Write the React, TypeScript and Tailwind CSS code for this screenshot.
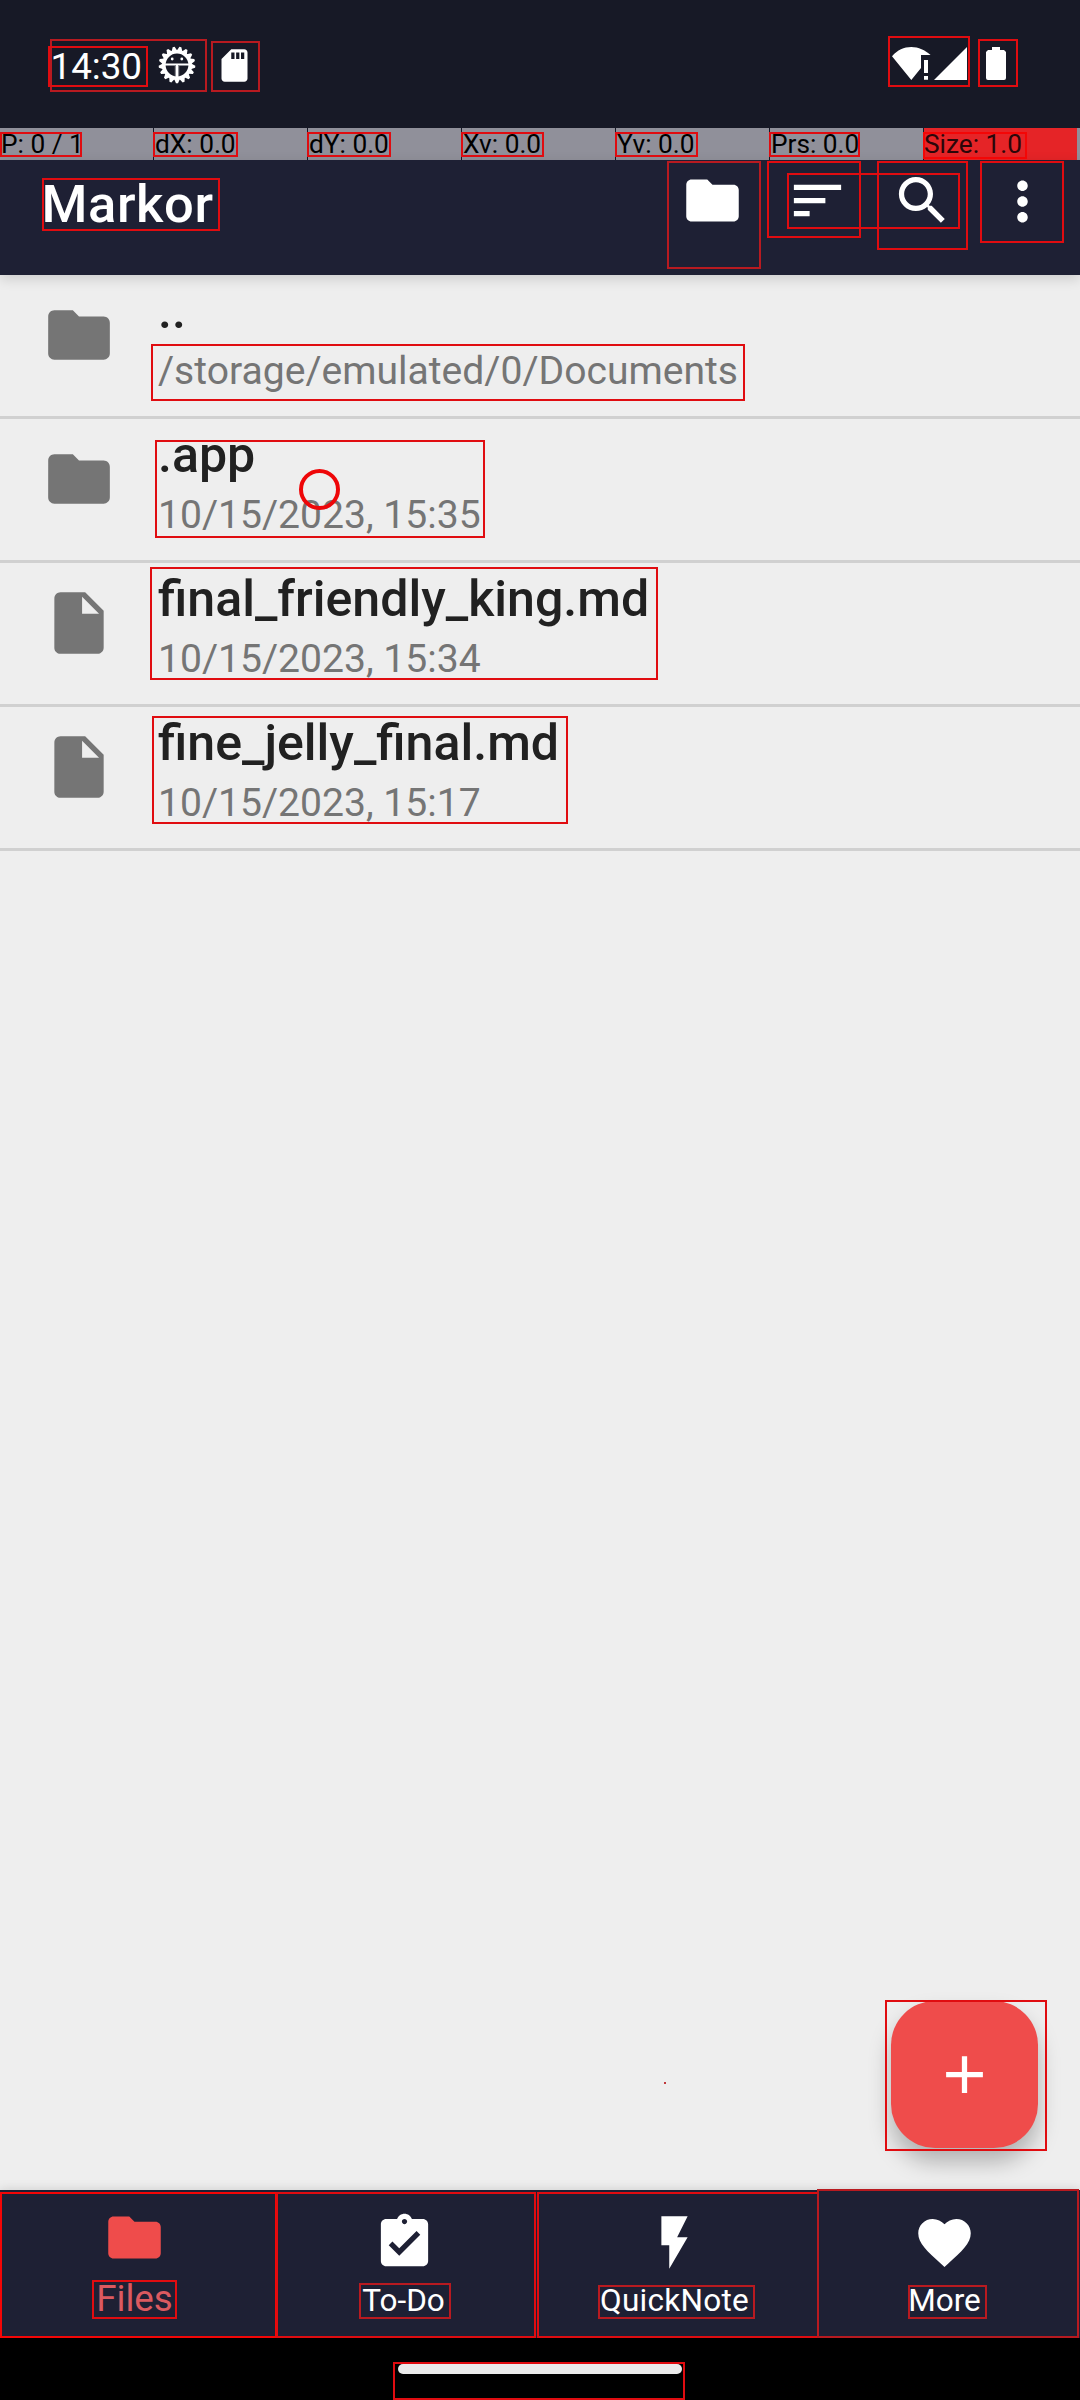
import React from "react";

const PATHS = {
  folder: "M10 4H4c-1.1 0-1.99.9-1.99 2L2 18c0 1.1.9 2 2 2h16c1.1 0 2-.9 2-2V8c0-1.1-.9-2-2-2h-8l-2-2z",
  file: "M6 2c-1.1 0-1.99.9-1.99 2L4 20c0 1.1.89 2 1.99 2H18c1.1 0 2-.9 2-2V8l-6-6H6zm7 7V3.5L18.5 9H13z",
  sort: "M3 18h6v-2H3v2zM3 6v2h18V6H3zm0 7h12v-2H3v2z",
  search:
    "M15.5 14h-.79l-.28-.27C15.41 12.59 16 11.11 16 9.5 16 5.91 13.09 3 9.5 3S3 5.91 3 9.5 5.91 16 9.5 16c1.61 0 3.09-.59 4.23-1.57l.27.28v.79l5 4.99L20.49 19l-4.99-5zm-6 0C7.01 14 5 11.99 5 9.5S7.01 5 9.5 5 14 7.01 14 9.5 11.99 14 9.5 14z",
  more: "M12 8c1.1 0 2-.9 2-2s-.9-2-2-2-2 .9-2 2 .9 2 2 2zm0 2c-1.1 0-2 .9-2 2s.9 2 2 2 2-.9 2-2-.9-2-2-2zm0 6c-1.1 0-2 .9-2 2s.9 2 2 2 2-.9 2-2-.9-2-2-2z",
  add: "M19 13h-6v6h-2v-6H5v-2h6V5h2v6h6v2z",
  todo: "M19 3h-4.18C14.4 1.84 13.3 1 12 1c-1.3 0-2.4.84-2.82 2H5c-1.1 0-2 .9-2 2v14c0 1.1.9 2 2 2h14c1.1 0 2-.9 2-2V5c0-1.1-.9-2-2-2zm-7 0c.55 0 1 .45 1 1s-.45 1-1 1-1-.45-1-1 .45-1 1-1zm-2 14l-4-4 1.41-1.41L10 14.17l6.59-6.59L18 9l-8 8z",
  flash: "M7 2v11h3v9l7-12h-4l4-8z",
  heart:
    "M12 21.35l-1.45-1.32C5.4 15.36 2 12.28 2 8.5 2 5.42 4.42 3 7.5 3c1.74 0 3.41.81 4.5 2.09C13.09 3.81 14.76 3 16.5 3 19.58 3 22 5.42 22 8.5c0 3.78-3.4 6.86-8.55 11.54L12 21.35z",
  sd: "M18 2h-8L4 8v12c0 1.1.9 2 2 2h12c1.1 0 2-.9 2-2V4c0-1.1-.9-2-2-2zm-6 6h-2V4h2v4zm3 0h-2V4h2v4zm3 0h-2V4h2v4z",
};

function Icon({ name, className }: { name: keyof typeof PATHS; className: string }) {
  return (
    <svg viewBox="0 0 24 24" fill="currentColor" className={className}>
      <path d={PATHS[name]} />
    </svg>
  );
}

function GearFace() {
  const teeth = Array.from({ length: 17 }, (_, i) => (i * 360) / 17 + 180);
  return (
    <svg viewBox="-19 -19 38 38" className="ml-[9px] mt-[46px] size-[38px] shrink-0">
      {teeth.map((a) => (
        <path key={a} d="M-2.9 -14 L-1 -18.3 H1 L2.9 -14Z" fill="#fff" transform={`rotate(${a})`} />
      ))}
      <circle r="13.2" fill="none" stroke="#fff" strokeWidth="3.6" />
      <path d="M-12 -0.6H12M0 0V13" stroke="#fff" strokeWidth="2" fill="none" />
      <path d="M-1.6 1V12M1.6 1V12" stroke="#fff" strokeOpacity="0.5" strokeWidth="1.2" fill="none" />
      <circle cx="-4.8" cy="-6" r="1.4" fill="#fff" />
      <circle cx="4.8" cy="-6" r="1.4" fill="#fff" />
    </svg>
  );
}

function StatusBar() {
  return (
    <div className="flex h-[128px] items-start bg-[#171926] text-white">
      <span className="ml-[50.5px] mt-[46px] w-[98.5px] text-[36.75px] leading-[41px]">14:30</span>
      <GearFace />
      <Icon name="sd" className="ml-[19px] mt-[45.5px] size-[39px]" />
      <div className="ml-auto mr-[74px] mt-[47px] flex">
        <svg viewBox="0 0 39 33" className="h-[33px] w-[39px]" fill="#fff">
          <path d="M0 9.2C5.4 3 12 0 19.3 0S33 3 38.6 8H29V21L19.3 33Z" />
          <path d="M32 13h4v13h-4zM32 29h4v3.7h-4z" />
        </svg>
        <svg viewBox="0 0 33 33" className="ml-[3px] h-[33px] w-[33px]" fill="#fff">
          <path d="M33 0V33H0Z" />
        </svg>
        <svg viewBox="0 0 20 33" className="ml-[19px] h-[33px] w-[20px]" fill="#fff">
          <path d="M6 0h8v3h4l2 2v26q0 2-2 2H2q-2 0-2-2V5l2-2h4z" />
        </svg>
      </div>
    </div>
  );
}

const POINTER = ["P: 0 / 1", "dX: 0.0", "dY: 0.0", "Xv: 0.0", "Yv: 0.0", "Prs: 0.0", "Size: 1.0"];

function PointerBar() {
  return (
    <div className="flex h-8 bg-[#90909a] text-[26.25px] leading-[33px] text-black">
      {POINTER.map((t, i) => (
        <span
          key={t}
          className={
            i === 0
              ? "w-[153px] pl-px"
              : i === 6
                ? "w-[154px] border-l border-[#171926] bg-[#e52427] text-[#2b0609]"
                : "w-[154px] border-l border-[#171926] pl-px"
          }
        >
          {t}
        </span>
      ))}
    </div>
  );
}

function AppBar() {
  return (
    <header className="relative z-10 flex h-[115px] items-start bg-[#1e2034] text-white shadow-[0_4px_12px_rgba(0,0,0,0.14)]">
      <h1 className="ml-[41.5px] mt-[14px] text-[52.5px] font-medium leading-[60px] tracking-[0.6px]">Markor</h1>
      <div className="ml-auto mr-[26px] mt-[9px] flex">
        <Icon name="folder" className="size-[63px]" />
        <Icon name="sort" className="ml-[42px] size-[63px]" />
        <Icon name="search" className="ml-[42px] size-[63px]" />
        <Icon name="more" className="ml-[37px] mt-px size-[63px]" />
      </div>
    </header>
  );
}

const ROWS: { icon: "folder" | "file"; title: string; sub: string }[] = [
  { icon: "folder", title: "..", sub: "/storage/emulated/0/Documents" },
  { icon: "folder", title: ".app", sub: "10/15/2023, 15:35" },
  { icon: "file", title: "final_friendly_king.md", sub: "10/15/2023, 15:34" },
  { icon: "file", title: "fine_jelly_final.md", sub: "10/15/2023, 15:17" },
];

function FileList() {
  return (
    <ul>
      {ROWS.map((r) => (
        <li key={r.title} className="flex h-[144px] border-b-[3px] border-[#d0d0d0]">
          <Icon name={r.icon} className="ml-[42px] mt-[23px] size-[74px] text-[#757575]" />
          <div className="ml-[42px] pt-[7px]">
            <div className="text-[50.1px] font-medium leading-[58px] text-[#212121]">{r.title}</div>
            <div className="text-[39.1px] leading-[63px] text-[#757575]">{r.sub}</div>
          </div>
        </li>
      ))}
    </ul>
  );
}

function BottomNav() {
  return (
    <nav className="relative grid h-[148px] grid-cols-4 bg-[#1e2034] text-white shadow-[0_0_10px_rgba(0,0,0,0.15)]">
      <div className="flex flex-col items-center pr-px pt-[15.5px] text-[#ef4c4b]">
        <Icon name="folder" className="size-[63px]" />
        <span className="mt-[10px] text-[36.75px] leading-10 text-[#db5a60]">Files</span>
      </div>
      <div className="flex flex-col items-center pr-px pt-[20.5px]">
        <Icon name="todo" className="size-[63px]" />
        <span className="mt-[7px] pr-0.5 text-[31.5px] leading-10">To-Do</span>
      </div>
      <div className="flex flex-col items-center pr-px pt-[20.5px]">
        <Icon name="flash" className="size-[63px]" />
        <span className="mt-[7px] text-[31.5px] leading-10 tracking-[0.25px]">QuickNote</span>
      </div>
      <div className="flex flex-col items-center pr-px pt-[20.5px]">
        <Icon name="heart" className="size-[63px]" />
        <span className="mt-[7px] text-[31.5px] leading-10">More</span>
      </div>
    </nav>
  );
}

const DARK = "#b81a20";
const MID = "#e00c10";
const BRIGHT = "#f40606";

/* Highlighted element bounds: left, top, right, bottom, colour */
const BOUNDS: [number, number, number, number, string][] = [
  [50, 39, 207, 92, DARK],
  [48, 46, 148, 87, MID],
  [211, 41, 260, 92, DARK],
  [888, 36, 970, 87, MID],
  [978, 39, 1018, 87, MID],
  [0, 132, 82, 157, MID],
  [153, 132, 238, 157, MID],
  [307, 132, 391, 157, MID],
  [461, 132, 544, 157, MID],
  [615, 132, 698, 157, MID],
  [769, 132, 860, 157, MID],
  [923, 132, 1027, 159, BRIGHT],
  [42, 178, 220, 231, MID],
  [667, 161, 761, 269, DARK],
  [767, 161, 861, 238, MID],
  [787, 173, 960, 229, MID],
  [877, 161, 968, 250, MID],
  [980, 161, 1064, 243, MID],
  [151, 344, 745, 401, MID],
  [155, 440, 485, 538, MID],
  [150, 567, 658, 680, MID],
  [152, 716, 568, 824, MID],
  [885, 2000, 1047, 2151, MID],
  [0, 2192, 277, 2338, BRIGHT],
  [276, 2192, 536, 2338, MID],
  [537, 2192, 819, 2338, MID],
  [817, 2189, 1079, 2338, DARK],
  [92, 2280, 177, 2319, MID],
  [359, 2283, 451, 2319, DARK],
  [598, 2285, 755, 2319, DARK],
  [908, 2285, 987, 2319, DARK],
  [393, 2362, 685, 2400, MID],
];

function BoundsOverlay() {
  return (
    <div className="pointer-events-none absolute inset-0 z-20">
      {BOUNDS.map(([l, t, r, b, c], i) => (
        <div
          key={i}
          className="absolute border-2"
          style={{ left: l, top: t, width: r - l, height: b - t, borderColor: c }}
        />
      ))}
      <div className="absolute left-[664px] top-[2082px] size-[2px] bg-[#c0393c]" />
      <div className="absolute left-[299px] top-[469px] size-[41px] rounded-full border-4 border-[#ee0608]" />
    </div>
  );
}

export default function App() {
  return (
    <div className="relative flex h-[2400px] w-[1080px] flex-col overflow-hidden bg-[#eeeeee] font-['Roboto',sans-serif]">
      <StatusBar />
      <PointerBar />
      <AppBar />
      <main className="relative flex-1">
        <FileList />
        <button className="absolute bottom-[42px] right-[42px] flex size-[147px] items-center justify-center rounded-[44px] bg-[#ef4c4b] text-white shadow-[0_14px_22px_rgba(0,0,0,0.26)]">
          <Icon name="add" className="size-[63px]" />
        </button>
      </main>
      <BottomNav />
      <div className="flex h-[62px] justify-center bg-black pt-[26px]">
        <div className="h-[10px] w-[284px] rounded-full bg-[#ebebeb]" />
      </div>
      <BoundsOverlay />
    </div>
  );
}
